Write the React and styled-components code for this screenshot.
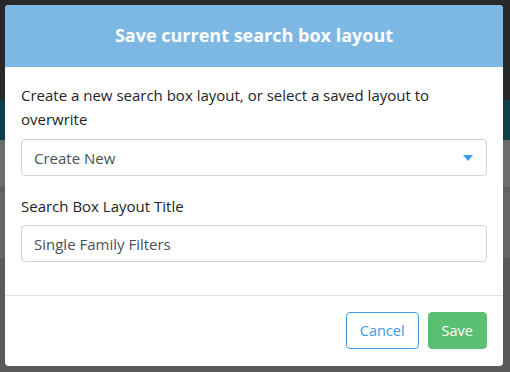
import styled, { createGlobalStyle } from 'styled-components';

const GlobalStyle = createGlobalStyle`
  html, body {
    margin: 0;
    padding: 0;
    width: 510px;
    height: 372px;
    overflow: hidden;
  }
  body {
    font-family: "Open Sans", "Noto Sans", Arial, sans-serif;
  }
`;

const bands = [
  { h: 100, c: '#262829' },
  { h: 40, c: '#103f4c' },
  { h: 47, c: '#6c6c6c' },
  { h: 5, c: '#5e5e5e' },
  { h: 66, c: '#676767' },
  { h: 114, c: '#585a5c' },
];

const Page = styled.div`
  position: relative;
  width: 510px;
  height: 372px;
  overflow: hidden;
`;

const Band = styled.div`
  height: ${p => p.$h}px;
  background: ${p => p.$c};
`;

const Overlay = styled.div`
  position: absolute;
  inset: 0;
  padding: 5px 7px 6px 5px;
  box-sizing: border-box;
`;

const Modal = styled.div`
  height: 100%;
  background: #fff;
  border-radius: 4px;
  overflow: hidden;
  display: flex;
  flex-direction: column;
`;

const Header = styled.div`
  height: 62px;
  background: #7db8e4;
  display: flex;
  align-items: center;
  justify-content: center;
  color: #fff;
  font-size: 18px;
  font-weight: 700;
  padding-bottom: 2px;
  box-sizing: border-box;
`;

const Body = styled.div`
  padding: 16px 16px 0;
  color: #212529;
  font-size: 15px;
  line-height: 24px;
  border-bottom: 1px solid #dee2e6;
  height: 229px;
  box-sizing: border-box;
`;

const Intro = styled.p`
  margin: 0 0 8px;
`;

const Label = styled.label`
  display: block;
  margin: 18px 0 7px;
`;

const Field = styled.div`
  height: 37px;
  border: 1px solid #ced4da;
  border-radius: 4px;
  box-sizing: border-box;
  display: flex;
  align-items: center;
  justify-content: space-between;
  padding: 0 12px;
  color: #495057;
  font-size: 15px;
`;

const Caret = styled.span`
  width: 0;
  height: 0;
  border-left: 5px solid transparent;
  border-right: 5px solid transparent;
  border-top: 6px solid #3d9be9;
  margin-right: 1px;
`;

const Footer = styled.div`
  flex: 1;
  display: flex;
  justify-content: flex-end;
  align-items: center;
  gap: 9px;
  padding: 0 16px 1px;
`;

const Button = styled.button`
  height: 37px;
  padding: 0 13px;
  border-radius: 4px;
  font-family: inherit;
  font-size: 14.5px;
  border: 1px solid ${p => (p.$primary ? '#5bbf72' : '#3d9be9')};
  background: ${p => (p.$primary ? '#5bbf72' : '#fff')};
  color: ${p => (p.$primary ? '#fff' : '#3d9be9')};
  cursor: pointer;
`;

export default function App() {
  return (
    <Page>
      <GlobalStyle />
      {bands.map((b, i) => (
        <Band key={i} $h={b.h} $c={b.c} />
      ))}
      <Overlay>
        <Modal>
          <Header>Save current search box layout</Header>
          <Body>
            <Intro>Create a new search box layout, or select a saved layout to overwrite</Intro>
            <Field>
              Create New
              <Caret />
            </Field>
            <Label>Search Box Layout Title</Label>
            <Field>Single Family Filters</Field>
          </Body>
          <Footer>
            <Button>Cancel</Button>
            <Button $primary>Save</Button>
          </Footer>
        </Modal>
      </Overlay>
    </Page>
  );
}
